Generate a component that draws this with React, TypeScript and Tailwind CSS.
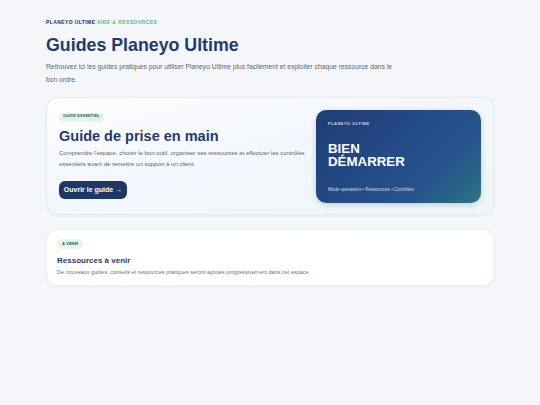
import React from "react";

export default function App() {
  return (
    <div
      className="min-h-[405px] w-full bg-[#f4f6f9] px-[46px] pt-[18px] pb-6"
      style={{ fontFamily: '"Liberation Sans", Arial, sans-serif' }}
    >
      <div className="text-[5px] font-bold uppercase tracking-[0.08em] leading-[8px]">
        <span className="text-[#1f2f4d]">Planeyo Ultime</span>{" "}
        <span className="text-[#5cb88a]">Aide &amp; Ressources</span>
      </div>
      <h1 className="mt-[7px] text-[17.8px] font-bold leading-[24px] text-[#1f3b6b]">
        Guides Planeyo Ultime
      </h1>
      <p className="mt-[2.5px] w-[356px] text-[6.75px] leading-[13px] text-[#5b6577]">
        Retrouvez ici les guides pratiques pour utiliser Planeyo Ultime plus facilement et exploiter chaque ressource dans le bon ordre.
      </p>

      <div className="mt-[11.5px] flex h-[118px] items-center justify-between rounded-[12px] border border-[#e3e9f0] bg-gradient-to-br from-[#fcfdff] via-[#f3f7fd] to-[#eef8f3] pl-[12px] pr-[12px] shadow-[0_1px_3px_rgba(30,50,80,0.05)]">
        <div className="flex w-[252px] flex-col">
          <span className="inline-flex h-[9px] w-fit items-center rounded-full bg-[#e3f3e9] px-[4px] text-[3.8px] font-bold uppercase tracking-[0.05em] text-[#2f5a40]">
            Guide essentiel
          </span>
          <h2 className="mt-[5px] text-[14.5px] font-bold leading-[18px] text-[#1f3b6b]">
            Guide de prise en main
          </h2>
          <p className="mt-[3px] text-[6px] leading-[10.7px] text-[#5b6577]">
            Comprendre l'espace, choisir le bon outil, organiser ses ressources et effectuer les contrôles essentiels avant de remettre un support à un client.
          </p>
          <button className="mt-[12px] flex h-[18px] w-[68px] items-center justify-center rounded-[6px] bg-[#1d3766] text-[7px] font-bold text-white">
            Ouvrir le guide →
          </button>
        </div>
        <div className="flex h-[93px] w-[165px] flex-col rounded-[10px] bg-[linear-gradient(135deg,#1f3c76_0%,#234b86_45%,#25548c_72%,#2e7682_100%)] px-[12px] pt-[11px] pb-[9px] shadow-[0_2px_6px_rgba(20,40,80,0.2)]">
          <div className="text-[4px] font-bold uppercase leading-[5px] tracking-[0.12em] text-[#c9d8ea]">
            Planeyo Ultime
          </div>
          <div className="mt-[16px] text-[13.3px] font-bold leading-[13.5px] text-white">
            <div>BIEN</div>
            <div>DÉMARRER</div>
          </div>
          <div className="mt-auto text-[4.6px] text-[#cfdcec]">
            Mode opératoire • Ressources • Contrôles
          </div>
        </div>
      </div>

      <div className="mt-[14px] flex h-[57px] flex-col rounded-[12px] border border-[#eef1f5] bg-white px-[10px] pt-[9px] shadow-[0_1px_4px_rgba(30,50,80,0.06)]">
        <span className="inline-flex h-[10px] w-fit items-center rounded-full bg-[#e6f4ec] px-[5px] text-[4px] font-bold uppercase text-[#2f5a40]">
          À venir
        </span>
        <h3 className="mt-[6px] text-[8px] font-bold leading-[11px] text-[#1f3b6b]">
          Ressources à venir
        </h3>
        <p className="mt-[2px] text-[5.5px] leading-[8px] text-[#6b7484]">
          De nouveaux guides, conseils et ressources pratiques seront ajoutés progressivement dans cet espace.
        </p>
      </div>
    </div>
  );
}
